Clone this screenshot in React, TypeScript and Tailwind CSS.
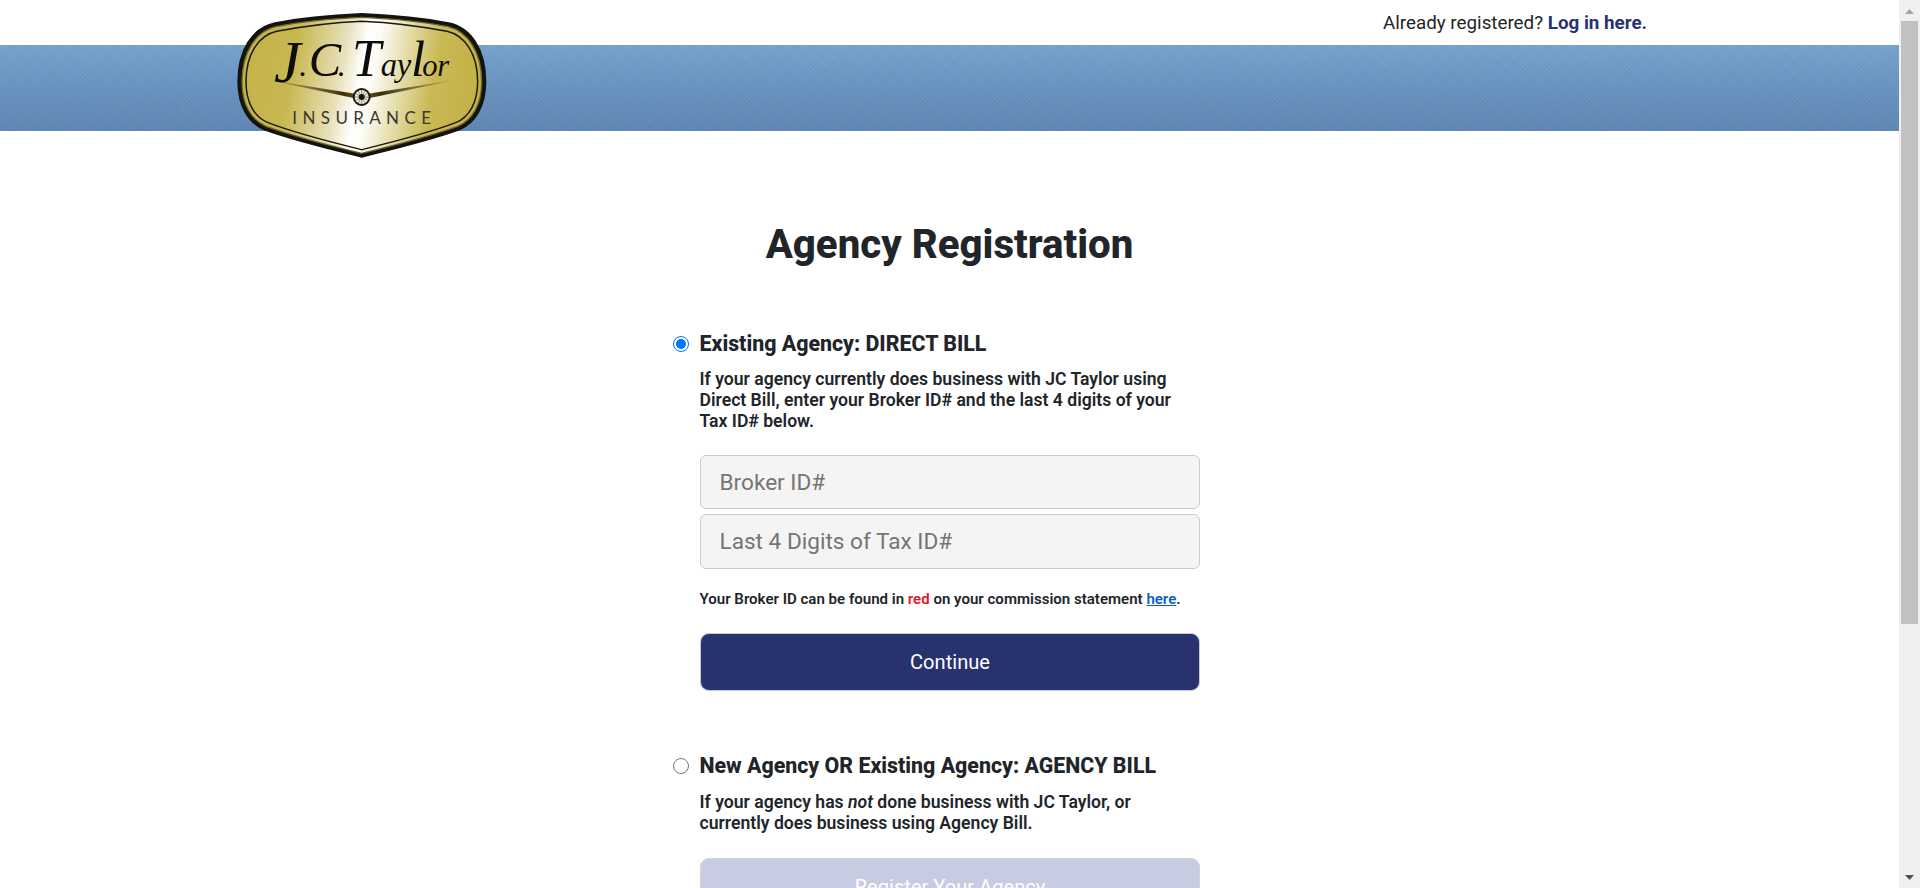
import { useState } from "react";

function Logo() {
  const spokes = Array.from({ length: 12 }, (_, i) => (i * Math.PI) / 6);
  return (
    <svg viewBox="0 0 870 510" className="h-[170px] w-[290px]" role="img" aria-label="J.C. Taylor Insurance">
      <defs>
        <linearGradient id="gold" gradientUnits="userSpaceOnUse" x1="80" y1="190" x2="770" y2="315">
          <stop offset="0" stopColor="#c5b34a" />
          <stop offset="0.2" stopColor="#c8b851" />
          <stop offset="0.4" stopColor="#e8e0ba" />
          <stop offset="0.49" stopColor="#ffffff" />
          <stop offset="0.54" stopColor="#fdfcf6" />
          <stop offset="0.8" stopColor="#c9b954" />
          <stop offset="1" stopColor="#c3b145" />
        </linearGradient>
        <linearGradient id="wing" x1="0" x2="1" y1="0" y2="0">
          <stop offset="0" stopColor="#5b4a12" stopOpacity="0.2" />
          <stop offset="0.4" stopColor="#3a2f0b" />
          <stop offset="0.5" stopColor="#7b6320" />
          <stop offset="0.6" stopColor="#3a2f0b" />
          <stop offset="1" stopColor="#5b4a12" stopOpacity="0.2" />
        </linearGradient>
      </defs>
      <path
        d="M425 42C335 46 240 55 165 70C98 84 55 150 55 245C55 318 86 368 134 389C225 422 335 448 425 470C515 448 625 422 717 389C765 368 796 318 796 245C796 150 753 84 686 70C610 55 515 46 425 42Z"
        fill="#14140e"
        stroke="#14140e"
        strokeWidth="6"
      />
      <path
        d="M425 52C335 56 242 65 167 80C108 94 66 156 66 245C66 314 94 360 138 379C229 412 335 438 425 460C515 438 621 412 713 379C757 360 785 314 785 245C785 156 743 94 684 80C608 65 515 56 425 52Z"
        fill="url(#gold)"
        stroke="#6f642a"
        strokeWidth="4"
      />
      <path
        d="M425 64C338 68 250 79 170 94C116 106 78 162 78 245C78 308 104 352 144 368C232 402 335 427 425 449C515 427 618 402 707 368C747 352 773 308 773 245C773 162 735 106 681 94C602 79 512 68 425 64Z"
        fill="none"
        stroke="#1b1a12"
        strokeWidth="4.5"
      />
      <path d="M146 240L425 284L706 240L425 299Z" fill="url(#wing)" />
      <circle cx="425" cy="291" r="24" fill="#f4f2e8" stroke="#17170f" strokeWidth="6" />
      {spokes.map((a) => (
        <line
          key={a}
          x1={425 + 9 * Math.cos(a)}
          y1={291 + 9 * Math.sin(a)}
          x2={425 + 21 * Math.cos(a)}
          y2={291 + 21 * Math.sin(a)}
          stroke="#55534a"
          strokeWidth="2"
        />
      ))}
      <circle cx="425" cy="291" r="9" fill="#17170f" />
      <text className="font-['Liberation_Serif',serif] italic" fill="#0d0d0a">
        <tspan x="162" y="246" fontSize="180">J</tspan>
        <tspan x="238" y="228" fontSize="96">.</tspan>
        <tspan x="266" y="228" fontSize="146">C</tspan>
        <tspan x="353" y="228" fontSize="96">.</tspan>
        <tspan x="396" y="228" fontSize="156">T</tspan>
        <tspan x="482 530" y="228" fontSize="98">ay</tspan>
        <tspan x="573" y="228" fontSize="152">l</tspan>
        <tspan x="607 652" y="228" fontSize="92">or</tspan>
      </text>
      <text
        x="217"
        y="373"
        fontSize="51"
        textLength="416"
        className="font-['Lato',sans-serif] font-normal"
        fill="#3b392e"
      >
        INSURANCE
      </text>
    </svg>
  );
}

function Header() {
  return (
    <header className="relative">
      <div className="flex h-[45px] justify-end pt-px pr-[252px] text-[18.8px] leading-[45px]">
        <p>
          Already registered?{" "}
          <a href="#login" className="font-bold text-[#28326f]">
            Log in here.
          </a>
        </p>
      </div>
      <div className="h-[86px] bg-[repeating-linear-gradient(45deg,rgba(255,255,255,0.04)_0_1px,transparent_1px_3px),repeating-linear-gradient(-45deg,rgba(30,60,110,0.04)_0_1px,transparent_1px_3px),linear-gradient(to_bottom,#76a3cc,#6793bf_50%,#5f86b2)]" />
      <a href="#home" className="absolute top-0 left-[220px]">
        <Logo />
      </a>
    </header>
  );
}

function Radio({ checked, onChange, label }: { checked: boolean; onChange: () => void; label: string }) {
  return (
    <label className="-ml-[27px] flex items-center gap-[10.5px] text-[21.35px] leading-[26px] font-extrabold whitespace-nowrap">
      <input type="radio" name="agency" checked={checked} onChange={onChange} className="peer sr-only" />
      <span
        className={
          checked
            ? "flex size-4 items-center justify-center rounded-full border border-[#0075ff] bg-white"
            : "flex size-4 items-center justify-center rounded-full border border-[#767676] bg-white"
        }
      >
        {checked && <span className="size-2.5 rounded-full bg-[#0075ff]" />}
      </span>
      {label}
    </label>
  );
}

function Scrollbar() {
  return (
    <div className="flex w-[21px] flex-col items-center bg-[#f0f0f0]">
      <div className="flex h-[21px] items-center pt-0.5">
        <svg viewBox="0 0 9 5" className="h-[5px] w-[9px]" fill="#a3a3a3">
          <path d="M4.5 0L9 5H0Z" />
        </svg>
      </div>
      <div className="h-[603px] w-[17px] bg-[#c1c1c1]" />
      <div className="mt-auto flex h-[21px] items-center pb-px">
        <svg viewBox="0 0 9 5" className="h-[5px] w-[9px]" fill="#505050">
          <path d="M0 0H9L4.5 5Z" />
        </svg>
      </div>
    </div>
  );
}

export default function App() {
  const [kind, setKind] = useState<"direct" | "agency">("direct");
  const field =
    "block w-full rounded-md border border-[#cccccc] bg-[#f4f4f4] px-[18.5px] text-[22.6px] text-[#212529] outline-none placeholder:text-[#757575]";
  return (
    <div className="flex h-[888px] overflow-hidden bg-white font-['Roboto',sans-serif] text-[#212529]">
      <div className="min-w-0 flex-1">
        <Header />
        <main className="flex flex-col items-center pt-[90px]">
          <h1 className="text-[40.2px] leading-[48px] font-extrabold">Agency Registration</h1>
          <div className="ml-px w-[500px] pt-[62px]">
            <Radio checked={kind === "direct"} onChange={() => setKind("direct")} label="Existing Agency: DIRECT BILL" />
            <p className="mt-3 -ml-[0.5px] text-[17.6px] leading-[21px] font-semibold">
              If your agency currently does business with JC Taylor using Direct Bill, enter your Broker ID# and the last 4
              digits of your Tax ID# below.
            </p>
            <input className={field + " mt-[23px] h-[54px]"} placeholder="Broker ID#" />
            <input className={field + " mt-[5px] h-[55px]"} placeholder="Last 4 Digits of Tax ID#" />
            <p className="mt-[21px] -ml-[0.5px] text-[15.05px] leading-[18px] font-semibold">
              Your Broker ID can be found in <span className="text-[#ed1330]">red</span> on your commission statement{" "}
              <a href="#statement" className="text-[#0a5fc7] underline">
                here
              </a>
              .
            </p>
            <button className="mt-[25px] block h-[58px] w-full rounded-[9px] border border-[#c8c8cf] bg-[#28326f] text-[20.1px] text-white">
              Continue
            </button>
            <div className="mt-[62px]">
              <Radio
                checked={kind === "agency"}
                onChange={() => setKind("agency")}
                label="New Agency OR Existing Agency: AGENCY BILL"
              />
            </div>
            <p className="mt-[13px] -ml-[0.5px] text-[17.6px] leading-[21px] font-semibold">
              If your agency has <em>not</em> done business with JC Taylor, or
              <br />
              currently does business using Agency Bill.
            </p>
            <button className="mt-6 block h-[58px] w-full rounded-[9px] border border-[#d3d3d8] bg-[#c8cce2] text-[20.1px] text-white">
              Register Your Agency
            </button>
          </div>
        </main>
      </div>
      <Scrollbar />
    </div>
  );
}
